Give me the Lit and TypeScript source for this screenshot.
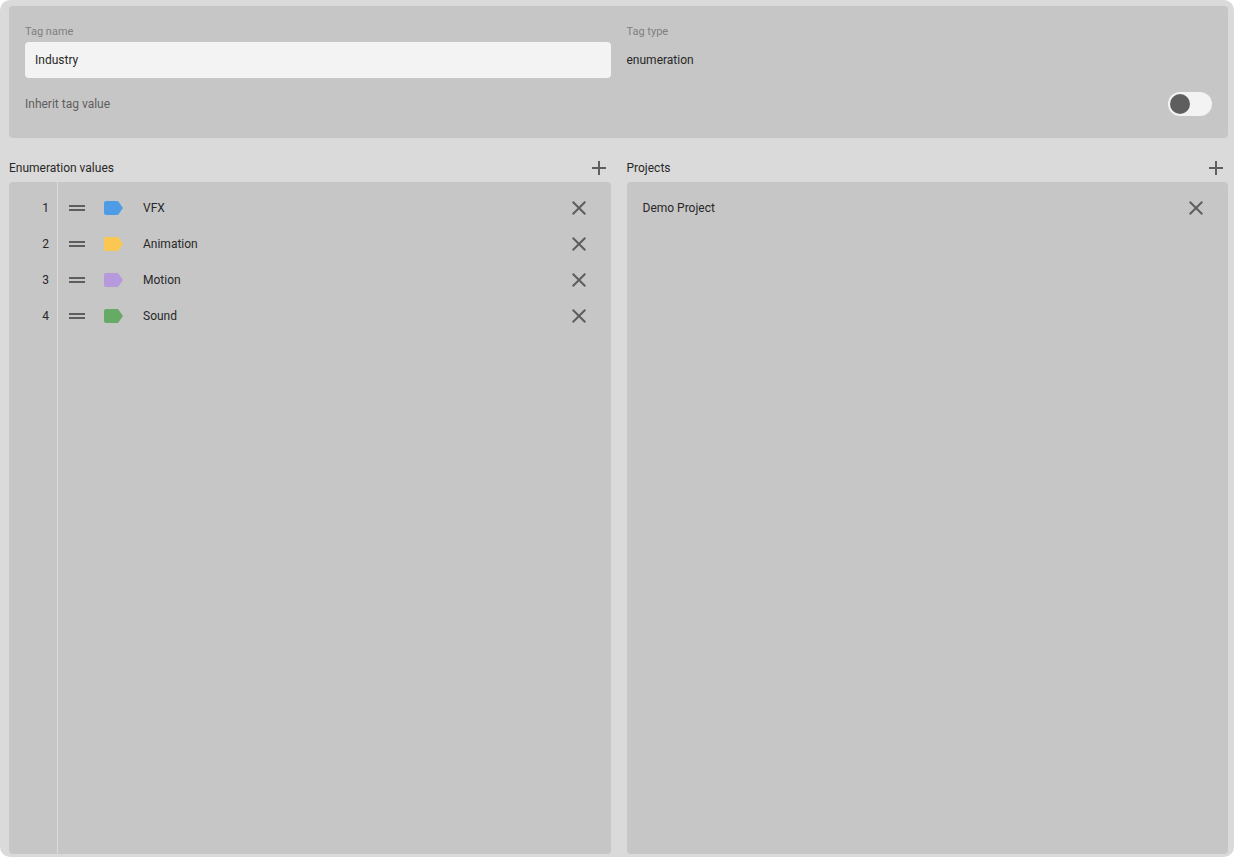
import { LitElement, html, css, svg } from "lit";
import { customElement, state } from "lit/decorators.js";

interface EnumValue {
  name: string;
  color: string;
}

const plusIcon = svg`<path d="M12 5V19M5 12H19" fill="none" stroke="currentColor" stroke-width="2"/>`;
const crossIcon = svg`<path d="M5.7 5.7L18.3 18.3M18.3 5.7L5.7 18.3" fill="none" stroke="currentColor" stroke-width="2"/>`;
const dragIcon = svg`<path d="M4 9H20V11H4ZM4 13H20V15H4Z" fill="currentColor"/>`;
const tagIcon = svg`<path d="M5 5H16Q17.1 5 17.7 5.9L22 12L17.7 18.1Q17.1 19 16 19H5Q3 19 3 17V7Q3 5 5 5Z" fill="currentColor"/>`;

const icon = (shape: unknown) =>
  html`<svg class="icon" viewBox="0 0 24 24" aria-hidden="true">${shape}</svg>`;

@customElement("app-root")
export class AppRoot extends LitElement {
  @state() private tagName_ = "Industry";
  @state() private inherit = false;
  @state() private values: EnumValue[] = [
    { name: "VFX", color: "#4e9be6" },
    { name: "Animation", color: "#fac852" },
    { name: "Motion", color: "#b799de" },
    { name: "Sound", color: "#66aa66" },
  ];
  @state() private projects = ["Demo Project"];

  static styles = css`
    :host {
      display: block;
      background: #fff;
      color: #282828;
      font: 12px/20px Roboto, sans-serif;
    }
    * {
      box-sizing: border-box;
    }
    .shell {
      display: flex;
      flex-direction: column;
      min-height: 100vh;
      padding: 6px 6px 3px 9px;
      border-radius: 10px;
      background: #dadada;
    }
    .panel {
      border-radius: 4px;
      background-color: #c6c6c6;
    }
    .details {
      padding: 16px;
    }
    .columns {
      display: grid;
      grid-template-columns: 1fr 1fr;
      column-gap: 16px;
    }
    .field {
      display: flex;
      flex-direction: column;
    }
    .label {
      font-size: 11px;
      line-height: 20px;
      color: #808080;
    }
    .input {
      width: 100%;
      height: 36px;
      padding: 0 10px;
      border: 0;
      border-radius: 4px;
      background: #f3f3f3;
      color: inherit;
      font: inherit;
    }
    .readonly {
      line-height: 36px;
    }
    .option {
      display: flex;
      align-items: center;
      justify-content: space-between;
      height: 36px;
      margin-top: 8px;
      color: #5e5e5e;
    }
    .toggle {
      appearance: none;
      display: flex;
      width: 44px;
      height: 24px;
      margin: 0;
      padding: 2px;
      border-radius: 12px;
      background: #f3f3f3;
      cursor: pointer;
    }
    .toggle::before {
      content: "";
      width: 20px;
      height: 20px;
      border-radius: 50%;
      background: #5e5e5e;
    }
    .toggle:checked {
      justify-content: flex-end;
    }
    .lists {
      flex: 1;
      margin-top: 16px;
    }
    .list {
      display: flex;
      flex-direction: column;
    }
    .header {
      display: flex;
      align-items: center;
      justify-content: space-between;
      height: 28px;
    }
    .title {
      margin: 0;
      font: inherit;
    }
    .rows {
      flex: 1;
      margin: 0;
      padding: 8px 0;
      list-style: none;
    }
    .numbered {
      background-image: linear-gradient(#dadada, #dadada);
      background-repeat: no-repeat;
      background-position: 48px 0;
      background-size: 1px 100%;
    }
    .row {
      display: flex;
      align-items: center;
      height: 36px;
      padding: 0 20px 0 16px;
    }
    .numbered .row {
      padding-left: 0;
    }
    .number {
      width: 40px;
      margin-right: 16px;
      text-align: right;
    }
    .name {
      flex: 1;
    }
    .icon {
      display: block;
      width: 24px;
      height: 24px;
    }
    .button {
      padding: 0;
      border: 0;
      background: none;
      color: #5e5e5e;
      cursor: pointer;
    }
    .drag {
      margin-right: 12px;
      cursor: grab;
    }
    .swatch {
      margin-right: 18px;
    }
  `;

  private removeValue(index: number) {
    this.values = this.values.filter((_, i) => i !== index);
  }

  private addValue() {
    this.values = [...this.values, { name: "New value", color: "#4e9be6" }];
  }

  private removeProject(index: number) {
    this.projects = this.projects.filter((_, i) => i !== index);
  }

  private addProject() {
    this.projects = [...this.projects, "New project"];
  }

  private renderValue(value: EnumValue, index: number) {
    return html`<li class="row">
      <span class="number">${index + 1}</span>
      <button class="button drag" aria-label="Reorder ${value.name}">${icon(dragIcon)}</button>
      <button class="button swatch" style="color:${value.color}" aria-label="Color of ${value.name}">
        ${icon(tagIcon)}
      </button>
      <span class="name">${value.name}</span>
      <button class="button" aria-label="Remove ${value.name}" @click=${() => this.removeValue(index)}>
        ${icon(crossIcon)}
      </button>
    </li>`;
  }

  private renderHeader(title: string, add: () => void) {
    return html`<header class="header">
      <h2 class="title">${title}</h2>
      <button class="button" aria-label="Add to ${title}" @click=${add}>${icon(plusIcon)}</button>
    </header>`;
  }

  render() {
    return html`<main class="shell">
      <section class="panel details">
        <div class="columns">
          <div class="field">
            <label class="label" for="tag-name">Tag name</label>
            <input
              class="input"
              id="tag-name"
              type="text"
              .value=${this.tagName_}
              @input=${(e: Event) => (this.tagName_ = (e.target as HTMLInputElement).value)}
            />
          </div>
          <div class="field">
            <span class="label">Tag type</span>
            <span class="readonly">enumeration</span>
          </div>
        </div>
        <div class="option">
          <label for="inherit">Inherit tag value</label>
          <input
            class="toggle"
            id="inherit"
            type="checkbox"
            role="switch"
            .checked=${this.inherit}
            @change=${(e: Event) => (this.inherit = (e.target as HTMLInputElement).checked)}
          />
        </div>
      </section>
      <div class="columns lists">
        <section class="list">
          ${this.renderHeader("Enumeration values", () => this.addValue())}
          <ol class="panel rows numbered">
            ${this.values.map((v, i) => this.renderValue(v, i))}
          </ol>
        </section>
        <section class="list">
          ${this.renderHeader("Projects", () => this.addProject())}
          <ul class="panel rows">
            ${this.projects.map(
              (name, i) => html`<li class="row">
                <span class="name">${name}</span>
                <button class="button" aria-label="Remove ${name}" @click=${() => this.removeProject(i)}>
                  ${icon(crossIcon)}
                </button>
              </li>`
            )}
          </ul>
        </section>
      </div>
    </main>`;
  }
}
